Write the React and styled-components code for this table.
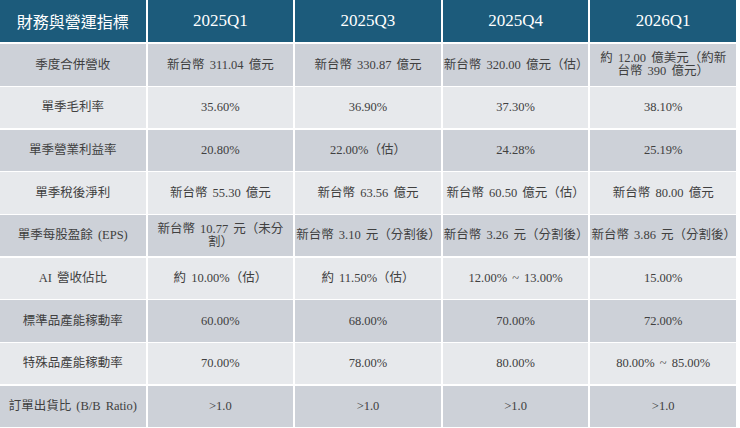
import React from 'react';
import styled, { createGlobalStyle } from 'styled-components';

const GlobalStyle = createGlobalStyle`
  html, body {
    margin: 0;
    padding: 0;
    background: #ffffff;
  }
`;

const Table = styled.div`
  display: grid;
  grid-template-columns: repeat(5, 1fr);
  grid-template-rows: 43px repeat(9, 1fr);
  column-gap: 2px;
  row-gap: 1.4px;
  width: 736px;
  height: 427px;
  background: #ffffff;
  font-family: "Liberation Serif", "Noto Sans CJK TC", serif;
`;

const HeadCell = styled.div`
  display: flex;
  align-items: center;
  justify-content: center;
  background: #1c5b7b;
  color: #ffffff;
  font-size: ${(p) => (p.$first ? '16px' : '17px')};
  margin-bottom: 1px;
`;

const Cell = styled.div`
  display: flex;
  align-items: center;
  justify-content: center;
  background: ${(p) => (p.$shade ? '#cdd1d8' : '#e7e9ec')};
  color: #404040;
  font-size: 12.5px;
  line-height: 13px;
  word-spacing: 2px;
  text-align: center;
  white-space: pre-line;
  padding: 0 1px;
`;

const columns = ['財務與營運指標', '2025Q1', '2025Q3', '2025Q4', '2026Q1'];

const rows = [
  ['季度合併營收', '新台幣 311.04 億元', '新台幣 330.87 億元', '新台幣 320.00 億元（估）', '約 12.00 億美元（約新\n台幣 390 億元）'],
  ['單季毛利率', '35.60%', '36.90%', '37.30%', '38.10%'],
  ['單季營業利益率', '20.80%', '22.00%（估）', '24.28%', '25.19%'],
  ['單季稅後淨利', '新台幣 55.30 億元', '新台幣 63.56 億元', '新台幣 60.50 億元（估）', '新台幣 80.00 億元'],
  ['單季每股盈餘 (EPS)', '新台幣 10.77 元（未分\n割）', '新台幣 3.10 元（分割後）', '新台幣 3.26 元（分割後）', '新台幣 3.86 元（分割後）'],
  ['AI 營收佔比', '約 10.00%（估）', '約 11.50%（估）', '12.00% ~ 13.00%', '15.00%'],
  ['標準品產能稼動率', '60.00%', '68.00%', '70.00%', '72.00%'],
  ['特殊品產能稼動率', '70.00%', '78.00%', '80.00%', '80.00% ~ 85.00%'],
  ['訂單出貨比 (B/B Ratio)', '>1.0', '>1.0', '>1.0', '>1.0'],
];

const App = () => {
  return (
    <>
      <GlobalStyle />
      <Table>
        {columns.map((c, i) => (
          <HeadCell key={c} $first={i === 0}>{c}</HeadCell>
        ))}
        {rows.map((row, r) =>
          row.map((val, c) => (
            <Cell key={`${r}-${c}`} $shade={r % 2 === 0}>
              {val}
            </Cell>
          ))
        )}
      </Table>
    </>
  );
};

export default App;
